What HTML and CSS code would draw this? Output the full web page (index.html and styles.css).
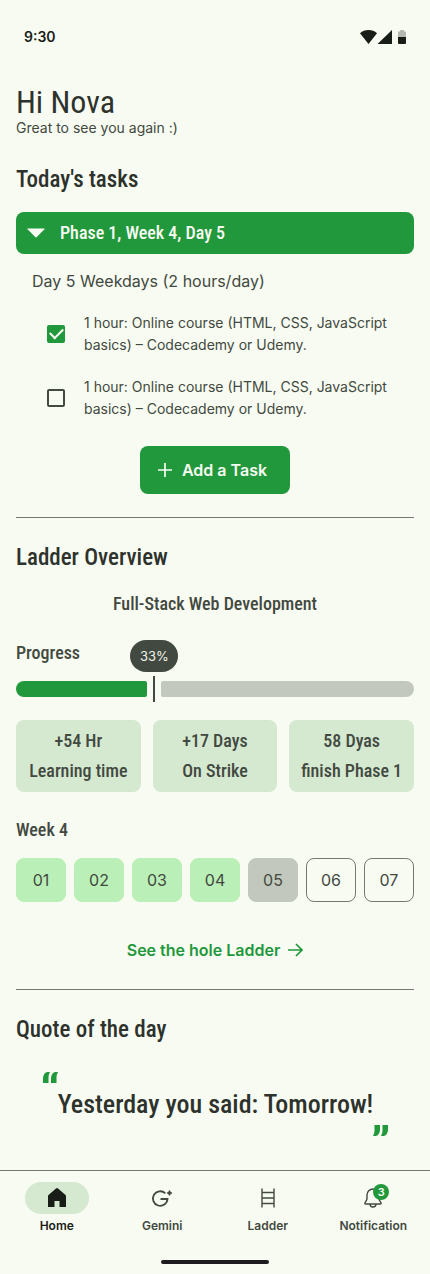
FILE: index.html
```html
<!DOCTYPE html>
<html lang="en">
<head>
<meta charset="utf-8">
<meta name="viewport" content="width=device-width, initial-scale=1">
<title>Home</title>
<link rel="stylesheet" href="styles.css">
</head>
<body>
<header class="status">
  <time class="clock">9:30</time>
  <svg class="status-icons" width="48" height="16" viewBox="0 0 48 16" aria-hidden="true">
    <path class="ink" d="M0 4.2C2.300 2.100 5.200 1 8.500 1S14.700 2.100 17 4.200L8.500 15z"/>
    <path class="ink" d="M32 1v14H17.500z"/>
    <path class="ink faded" d="M38 8V2.500h2V1h4v1.500h2V8z"/>
    <path class="ink" d="M38 8h8v6q0 1-1 1h-6q-1 0-1-1z"/>
  </svg>
</header>

<main class="content">
  <h1 class="greeting">Hi Nova</h1>
  <p class="welcome">Great to see you again :)</p>

  <section class="section tasks">
    <h2 class="heading">Today's tasks</h2>
    <button class="phase" type="button" aria-expanded="true">
      <svg width="18" height="10" viewBox="0 0 18 10" aria-hidden="true"><path d="M1 .5h16q1 0 .4.800L9.800 9q-.8.800-1.600 0L.6 1.300Q0 .5 1 .5z" fill="currentColor"/></svg>
      <span>Phase 1, Week 4, Day 5</span>
    </button>
    <p class="day-plan">Day 5 Weekdays (2 hours/day)</p>
    <ul class="task-list">
      <li class="task">
        <input class="check" type="checkbox" id="task-1" checked>
        <label for="task-1">1 hour: Online course (HTML, CSS, JavaScript basics) – Codecademy or Udemy.</label>
      </li>
      <li class="task">
        <input class="check" type="checkbox" id="task-2">
        <label for="task-2">1 hour: Online course (HTML, CSS, JavaScript basics) – Codecademy or Udemy.</label>
      </li>
    </ul>
    <button class="add" type="button">
      <svg width="14" height="14" viewBox="0 0 14 14" aria-hidden="true"><path d="M7 0v14M0 7h14" stroke="currentColor" stroke-width="1.700"/></svg>
      <span>Add a Task</span>
    </button>
  </section>

  <section class="section overview">
    <h2 class="heading">Ladder Overview</h2>
    <p class="subhead course">Full-Stack Web Development</p>
    <h3 class="subhead" id="progress-label">Progress</h3>
    <div class="progress" role="progressbar" aria-labelledby="progress-label" aria-valuenow="33" aria-valuemin="0" aria-valuemax="100">
      <div class="progress-done" style="width: 33%"></div>
      <div class="progress-mark"><span class="progress-value">33%</span></div>
      <div class="progress-rest"></div>
    </div>
    <ul class="stats">
      <li class="stat">+54 Hr<br>Learning time</li>
      <li class="stat">+17 Days<br>On Strike</li>
      <li class="stat">58 Dyas<br>finish Phase 1</li>
    </ul>
    <h3 class="subhead">Week 4</h3>
    <div class="days">
      <button class="day done" type="button">01</button>
      <button class="day done" type="button">02</button>
      <button class="day done" type="button">03</button>
      <button class="day done" type="button">04</button>
      <button class="day today" type="button">05</button>
      <button class="day" type="button">06</button>
      <button class="day" type="button">07</button>
    </div>
    <a class="more" href="#ladder">
      <span>See the hole Ladder</span>
      <svg width="15" height="14" viewBox="0 0 15 14" aria-hidden="true"><path d="M0 7h13.500M8 1l6 6-6 6" fill="none" stroke="currentColor" stroke-width="1.700"/></svg>
    </a>
  </section>

  <section class="section">
    <h2 class="heading">Quote of the day</h2>
    <blockquote class="quote">
      <svg class="mark" width="15" height="11" viewBox="0 0 15 11" aria-hidden="true"><path d="M0 11V6Q.5 1 4 0h3Q5.300 3 5.500 5.500V11zM8 11V6Q8.500 1 12 0h3Q13.300 3 13.500 5.500V11z" fill="currentColor"/></svg>
      <p class="saying">Yesterday you said: Tomorrow!</p>
      <svg class="mark mark-end" width="15" height="11" viewBox="0 0 15 11" aria-hidden="true"><path d="M15 0v5Q14.500 10 11 11H8Q9.700 8 9.500 5.500V0zM7 0v5Q6.500 10 3 11H0Q1.700 8 1.500 5.500V0z" fill="currentColor"/></svg>
    </blockquote>
  </section>
</main>

<footer class="bottom">
  <nav class="nav" aria-label="Main">
    <a class="nav-item active" href="#home" aria-current="page">
      <span class="pill"><svg width="20" height="20" viewBox="0 0 20 20" aria-hidden="true"><path class="ink" d="M10 0q.6 0 1 .4L18.500 7q.5.500.5 1.200V19h-6.500v-6h-5v6H1V8.200Q1 7.500 1.500 7L9 .4Q9.400 0 10 0z"/></svg></span>
      <span>Home</span>
    </a>
    <a class="nav-item" href="#gemini">
      <span class="pill"><svg width="22" height="20" viewBox="0 0 22 20" aria-hidden="true"><path d="M14.300 5.300A7.300 7.300 0 1 0 16.500 11H9.500" fill="none" stroke="currentColor" stroke-width="1.800"/><path d="M18.500 2q.8 2.200 3 3-2.200.8-3 3-.8-2.200-3-3 2.200-.8 3-3z" fill="currentColor"/></svg></span>
      <span>Gemini</span>
    </a>
    <a class="nav-item" href="#ladder">
      <span class="pill"><svg width="16" height="20" viewBox="0 0 16 20" aria-hidden="true"><path d="M2 .5v19M14 .5v19M2 4.500h12M2 10h12M2 15.500h12" fill="none" stroke="currentColor" stroke-width="1.400"/></svg></span>
      <span>Ladder</span>
    </a>
    <a class="nav-item" href="#notification">
      <span class="pill"><svg width="20" height="20" viewBox="0 0 20 20" aria-hidden="true"><path d="M10 1a6 6 0 0 0-6 6v3.500Q4 12 2.200 14.400q-1 1.600.8 1.600h14q1.800 0 .8-1.600Q16 12 16 10.500V7a6 6 0 0 0-6-6zM7 16a3 3 0 0 0 6 0" fill="none" stroke="currentColor" stroke-width="1.400"/></svg><span class="badge">3</span></span>
      <span>Notification</span>
    </a>
  </nav>
  <div class="home-bar"></div>
</footer>
</body>
</html>
```
FILE: styles.css
```css
:root {
  --page: #f8fbf2;
  --green: #22983c;
  --text: #424940;
  --strong: #2d322c;
  --ink: #191d17;
  --outline: #72796f;
  --muted: #c2c8bd;
  --soft: #d5e8d0;
  --mint: #baf0b7;
  --body: Inter, "Liberation Sans", sans-serif;
  --narrow: "Roboto Condensed", "Liberation Sans Narrow", "Open Sans Condensed", "DejaVu Sans Condensed", sans-serif;
}

* {
  box-sizing: border-box;
  margin: 0;
  padding: 0;
}

body {
  display: flex;
  flex-direction: column;
  min-height: 100vh;
  background: var(--page);
  color: var(--text);
  font: 400 14px/20px var(--body);
}

button {
  border: 0;
  color: inherit;
  font: inherit;
  cursor: pointer;
}

a {
  color: inherit;
  text-decoration: none;
}

ul {
  list-style: none;
}

svg {
  display: block;
}

.ink {
  fill: var(--ink);
}

.faded {
  opacity: 0.3;
}

.status {
  display: flex;
  align-items: center;
  justify-content: space-between;
  padding: 27px 22px 0 24px;
}

.clock {
  color: var(--ink);
  font-weight: 600;
}

.content {
  padding: 38px 16px 0;
}

.greeting {
  color: var(--strong);
  font: 400 32px/34px var(--narrow);
}

.welcome {
  font-size: 14px;
  line-height: 18px;
}

.section {
  display: flex;
  flex-direction: column;
  padding-top: 24px;
}

.tasks {
  padding-top: 27px;
}

.tasks,
.overview {
  border-bottom: 1px solid var(--outline);
}

.heading {
  color: var(--strong);
  font: 500 23px/32px var(--narrow);
}

.subhead {
  font: 500 18px/24px var(--narrow);
}

.phase {
  display: flex;
  align-items: center;
  gap: 15px;
  margin-top: 16px;
  padding: 9px 11px;
  border-radius: 8px;
  background: var(--green);
  color: var(--page);
  font: 500 18px/24px var(--narrow);
}

.day-plan {
  padding: 15px 16px 19px;
  font-size: 16px;
  line-height: 24px;
}

.task-list {
  display: grid;
  gap: 20px;
  padding: 0 20px 26px 31px;
}

.task {
  display: flex;
  align-items: center;
  gap: 19px;
  font-size: 14px;
  line-height: 22px;
}

.check {
  display: grid;
  flex: none;
  place-items: center;
  width: 18px;
  height: 18px;
  border: 2px solid var(--text);
  border-radius: 2px;
  appearance: none;
}

.check:checked {
  border-color: var(--green);
  background: var(--green);
}

.check:checked::before {
  width: 11px;
  height: 6px;
  margin-bottom: 4px;
  border: solid var(--page);
  border-width: 0 0 2px 2px;
  content: "";
  transform: rotate(-45deg);
}

.add {
  display: flex;
  align-items: center;
  align-self: center;
  gap: 10px;
  margin-bottom: 23px;
  padding: 12px 23px 12px 18px;
  border-radius: 8px;
  background: var(--green);
  color: var(--page);
  font-size: 16px;
  font-weight: 600;
  line-height: 24px;
}

.course {
  padding: 18px 0 25px;
  text-align: center;
}

.progress {
  display: flex;
  align-items: center;
  gap: 6px;
  padding: 11px 0 18px;
}

.progress-done,
.progress-rest {
  height: 16px;
}

.progress-done {
  flex: none;
  border-radius: 8px 2px 2px 8px;
  background: var(--green);
}

.progress-rest {
  flex: 1;
  border-radius: 2px 8px 8px 2px;
  background: var(--muted);
}

.progress-mark {
  position: relative;
  width: 2px;
  height: 26px;
  background: var(--text);
}

.progress-value {
  position: absolute;
  bottom: 30px;
  left: -23px;
  width: 48px;
  border-radius: 16px;
  background: var(--text);
  color: #eff2e9;
  font-size: 13px;
  line-height: 32px;
  text-align: center;
}

.stats {
  display: grid;
  grid-template-columns: repeat(3, 1fr);
  gap: 12px;
  margin-bottom: 26px;
}

.stat {
  padding: 6px 4px;
  border-radius: 8px;
  background: var(--soft);
  font: 500 18px/30px var(--narrow);
  text-align: center;
}

.days {
  display: grid;
  grid-template-columns: repeat(7, 1fr);
  gap: 8px;
  padding: 16px 0 36px;
}

.day {
  height: 44px;
  border: 1px solid var(--outline);
  border-radius: 8px;
  background: none;
  font-size: 16px;
}

.done {
  border-color: var(--mint);
  background: var(--mint);
}

.today {
  border-color: var(--muted);
  background: var(--muted);
}

.more {
  display: flex;
  align-items: center;
  align-self: center;
  gap: 8px;
  margin-bottom: 27px;
  color: var(--green);
  font-size: 16px;
  font-weight: 600;
  line-height: 24px;
}

.quote {
  display: flex;
  flex-direction: column;
  padding: 26px 26px 34px 27px;
}

.mark {
  color: var(--green);
}

.mark-end {
  align-self: flex-end;
}

.saying {
  padding: 4px 0;
  color: var(--strong);
  font: 500 26px/34px var(--narrow);
  text-align: center;
}

.bottom {
  margin-top: auto;
  padding-bottom: 10px;
  border-top: 1px solid var(--outline);
}

.nav {
  display: grid;
  grid-template-columns: repeat(4, 1fr);
  padding: 11px 4px 26px;
}

.nav-item {
  display: flex;
  flex-direction: column;
  align-items: center;
  gap: 4px;
  font-size: 12px;
  font-weight: 600;
  line-height: 16px;
}

.pill {
  position: relative;
  display: grid;
  place-items: center;
  width: 64px;
  height: 32px;
  border-radius: 16px;
}

.active {
  color: var(--ink);
}

.active .pill {
  background: var(--soft);
}

.badge {
  position: absolute;
  top: 2px;
  right: 16px;
  width: 16px;
  border-radius: 8px;
  background: var(--green);
  color: var(--page);
  font-size: 11px;
  line-height: 16px;
  text-align: center;
}

.home-bar {
  width: 108px;
  height: 4px;
  margin: 0 auto;
  border-radius: 2px;
  background: #1d1b20;
}
```
